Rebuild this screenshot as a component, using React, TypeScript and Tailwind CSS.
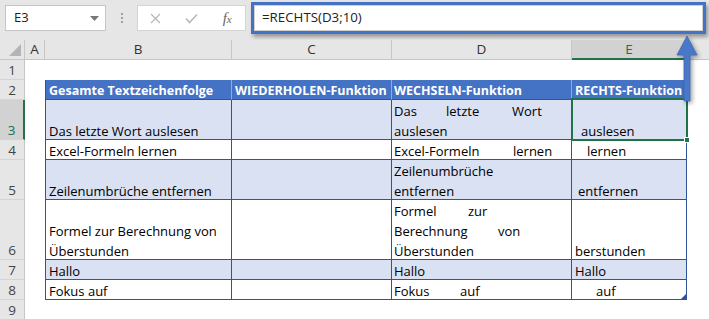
import React from "react";

const GRID = "grid grid-rows-1 grid-cols-[25px_20px_187px_160px_180px_115px_22px]";

function RowHead({ n, h, sel }: { n: number; h: number; sel?: boolean }) {
  return (
    <div
      className={`min-h-0 flex items-end justify-center pb-[0px] border-b border-[#d4d4d4] text-[13.5px] leading-[18px] ${
        sel
          ? "bg-[#d2d2d2] text-[#217346] border-r-2 border-r-[#217346]"
          : "bg-[#e6e6e6] text-[#444] border-r border-r-[#c6c6c6]"
      }`}
      style={{ height: h }}
    >
      {n}
    </div>
  );
}

function TCell({
  children,
  band,
  first,
  pl = "pl-[3px]",
  extra = "",
  overlay,
}: {
  children?: React.ReactNode;
  band?: boolean;
  first?: boolean;
  pl?: string;
  extra?: string;
  overlay?: React.ReactNode;
}) {
  return (
    <div
      className={`min-h-0 ${band ? "bg-[#d9e1f2]" : "bg-white"} border-r border-b border-[#2f5597] ${
        first ? "border-l" : ""
      } flex flex-col justify-end leading-[20px] text-black whitespace-nowrap ${pl} ${extra}`}
    >
      <div className="translate-y-[2px]">{children}</div>
      {overlay}
    </div>
  );
}

function Blank() {
  return <div className="bg-white min-h-0" />;
}

function DataRow({
  n,
  h,
  band,
  b,
  d,
  e,
  ePl,
  sel,
  last,
}: {
  n: number;
  h: number;
  band?: boolean;
  b: React.ReactNode;
  d: React.ReactNode;
  e: React.ReactNode;
  ePl: string;
  sel?: boolean;
  last?: boolean;
}) {
  return (
    <div className={GRID} style={{ height: h }}>
      <RowHead n={n} h={h} sel={sel} />
      <Blank />
      <TCell band={band} first>
        {b}
      </TCell>
      <TCell band={band} />
      <TCell band={band} pl="pl-[2px]">
        {d}
      </TCell>
      <TCell
        band={band}
        pl={ePl}
        extra="relative"
        overlay={
          <>
            {sel && (
              <>
                <div className="absolute z-10 left-[-1px] top-[-2px] right-[-2px] bottom-[-2px] border-2 border-[#217346]" />
                <div className="absolute z-10 right-[-4px] bottom-[-4px] w-[6px] h-[6px] bg-[#217346] border border-white" />
              </>
            )}
            {last && (
              <svg className="absolute right-[0px] bottom-[0px]" width="5" height="5">
                <polygon points="5,0 5,5 0,5" fill="#2f5597" />
              </svg>
            )}
          </>
        }
      >
        {e}
      </TCell>
      <Blank />
    </div>
  );
}

export default function App() {
  return (
    <div className="relative w-[709px] h-[319px] overflow-hidden bg-white font-['Open_Sans',sans-serif] text-[13px]">
      {/* Top bar */}
      <div className="h-[40px] bg-[#e6e6e6] flex items-start">
        <div className="mt-[5px] ml-[5px] w-[101px] h-[26px] bg-white border border-[#c6c6c6] flex items-center justify-between pl-[8px] pr-[6px]">
          <span className="text-[13px] text-[#222]">E3</span>
          <svg width="9" height="5">
            <polygon points="0,0 9,0 4.5,5" fill="#777" />
          </svg>
        </div>
        <div className="w-[31px] h-[36px] flex flex-col items-center justify-center gap-[2px]">
          <div className="w-[2px] h-[2px] bg-[#a0a0a0]" />
          <div className="w-[2px] h-[2px] bg-[#a0a0a0]" />
          <div className="w-[2px] h-[2px] bg-[#a0a0a0]" />
        </div>
        <div className="mt-[5px] w-[109px] h-[26px] bg-white border border-[#d4d4d4] flex items-center">
          <div className="flex-1 flex justify-center">
            <svg width="11" height="11" viewBox="0 0 11 11">
              <path d="M1 1 L10 10 M10 1 L1 10" stroke="#b8b8b8" strokeWidth="1.3" />
            </svg>
          </div>
          <div className="flex-1 flex justify-center">
            <svg width="13" height="11" viewBox="0 0 13 11">
              <path d="M1 5.5 L4.5 9.5 L12 1.5" stroke="#b8b8b8" strokeWidth="1.6" fill="none" />
            </svg>
          </div>
          <div className="flex-1 flex justify-center">
            <span className="font-['Liberation_Serif',serif] italic text-[15px] text-[#666] leading-none">
              f<span className="text-[11px]">x</span>
            </span>
          </div>
        </div>
        <div className="ml-[5px] mt-[2px] w-[455px] h-[32px] border-[3px] border-[#4472c4] bg-white shadow-[2px_3px_4px_rgba(0,0,0,0.35)]">
          <div className="h-full border border-[#d0d0d0] flex items-center pl-[7px] text-[13.3px] text-[#222]">
            =RECHTS(D3;10)
          </div>
        </div>
      </div>

      {/* Column headers */}
      <div className={`${GRID} h-[20px]`}>
        <div className="bg-[#e6e6e6] border-r border-b border-[#c6c6c6] relative">
          <svg className="absolute right-[3px] bottom-[3px]" width="12" height="12">
            <polygon points="12,0 12,12 0,12" fill="#b4b4b4" />
          </svg>
        </div>
        {["A", "B", "C", "D"].map((c) => (
          <div
            key={c}
            className="bg-[#e6e6e6] border-r border-b border-[#c6c6c6] flex items-center justify-center text-[13.5px] text-[#333]"
          >
            {c}
          </div>
        ))}
        <div className="bg-[#d2d2d2] border-r border-[#c6c6c6] border-b-2 border-b-[#217346] flex items-center justify-center text-[13.5px] text-[#217346]">
          E
        </div>
        <div className="bg-[#e6e6e6] border-b border-[#c6c6c6]" />
      </div>

      {/* Row 1 */}
      <div className={GRID} style={{ height: 20 }}>
        <RowHead n={1} h={20} />
        <Blank />
        <Blank />
        <Blank />
        <Blank />
        <Blank />
        <Blank />
      </div>

      {/* Row 2 header */}
      <div className={GRID} style={{ height: 20 }}>
        <RowHead n={2} h={20} />
        <Blank />
        {[
          ["Gesamte Textzeichenfolge", "border-l border-l-[#2f5597] pl-[3px]"],
          ["WIEDERHOLEN-Funktion", "pl-[3px]"],
          ["WECHSELN-Funktion", "pl-[2px]"],
          ["RECHTS-Funktion", "pl-[3px] border-r-[#2f5597]"],
        ].map(([t, c]) => (
          <div
            key={t}
            className={`min-h-0 bg-[#4472c4] text-white font-bold border-r border-r-[#8eaadb] border-b border-b-[#2f5597] flex items-end leading-[20px] whitespace-nowrap text-[12.5px] ${c}`}
          >
            <span className="translate-y-[2px]">{t}</span>
          </div>
        ))}
        <Blank />
      </div>

      <DataRow
        n={3}
        h={40}
        band
        sel
        b={<div>Das letzte Wort auslesen</div>}
        d={
          <>
            <div className="flex">
              <span className="w-[52px]">Das</span>
              <span className="w-[66px]">letzte</span>
              <span>Wort</span>
            </div>
            <div>auslesen</div>
          </>
        }
        e={<div>auslesen</div>}
        ePl="pl-[9px]"
      />
      <DataRow
        n={4}
        h={20}
        b={<div>Excel-Formeln lernen</div>}
        d={
          <div className="flex">
            <span className="w-[119px]">Excel-Formeln</span>
            <span>lernen</span>
          </div>
        }
        e={<div>lernen</div>}
        ePl="pl-[15px]"
      />
      <DataRow
        n={5}
        h={40}
        band
        b={<div>Zeilenumbrüche entfernen</div>}
        d={
          <>
            <div>Zeilenumbrüche</div>
            <div>entfernen</div>
          </>
        }
        e={<div>entfernen</div>}
        ePl="pl-[6px]"
      />
      <DataRow
        n={6}
        h={60}
        b={
          <>
            <div>Formel zur Berechnung von</div>
            <div>Überstunden</div>
          </>
        }
        d={
          <>
            <div className="flex">
              <span className="w-[74px]">Formel</span>
              <span>zur</span>
            </div>
            <div className="flex">
              <span className="w-[104px]">Berechnung</span>
              <span>von</span>
            </div>
            <div>Überstunden</div>
          </>
        }
        e={<div>berstunden</div>}
        ePl="pl-[3px]"
      />
      <DataRow
        n={7}
        h={20}
        band
        b={<div>Hallo</div>}
        d={<div>Hallo</div>}
        e={<div>Hallo</div>}
        ePl="pl-[3px]"
      />
      <DataRow
        n={8}
        h={20}
        last
        b={<div>Fokus auf</div>}
        d={
          <div className="flex">
            <span className="w-[66px]">Fokus</span>
            <span>auf</span>
          </div>
        }
        e={<div>auf</div>}
        ePl="pl-[24px]"
      />

      {/* Row 9 */}
      <div className={GRID} style={{ height: 20 }}>
        <RowHead n={9} h={20} />
        <Blank />
        <Blank />
        <Blank />
        <Blank />
        <Blank />
        <Blank />
      </div>

      {/* Arrow overlay */}
      <svg
        className="absolute z-20 left-[675px] top-[35px] drop-shadow-[2px_2px_2px_rgba(0,0,0,0.35)]"
        width="24"
        height="68"
        viewBox="0 0 24 68"
      >
        <polygon
          points="12,1 22,20 15,20 15,66 9,66 9,20 2,20"
          fill="#4a78c8"
          stroke="#3e68b4"
          strokeWidth="0.8"
        />
      </svg>
    </div>
  );
}
